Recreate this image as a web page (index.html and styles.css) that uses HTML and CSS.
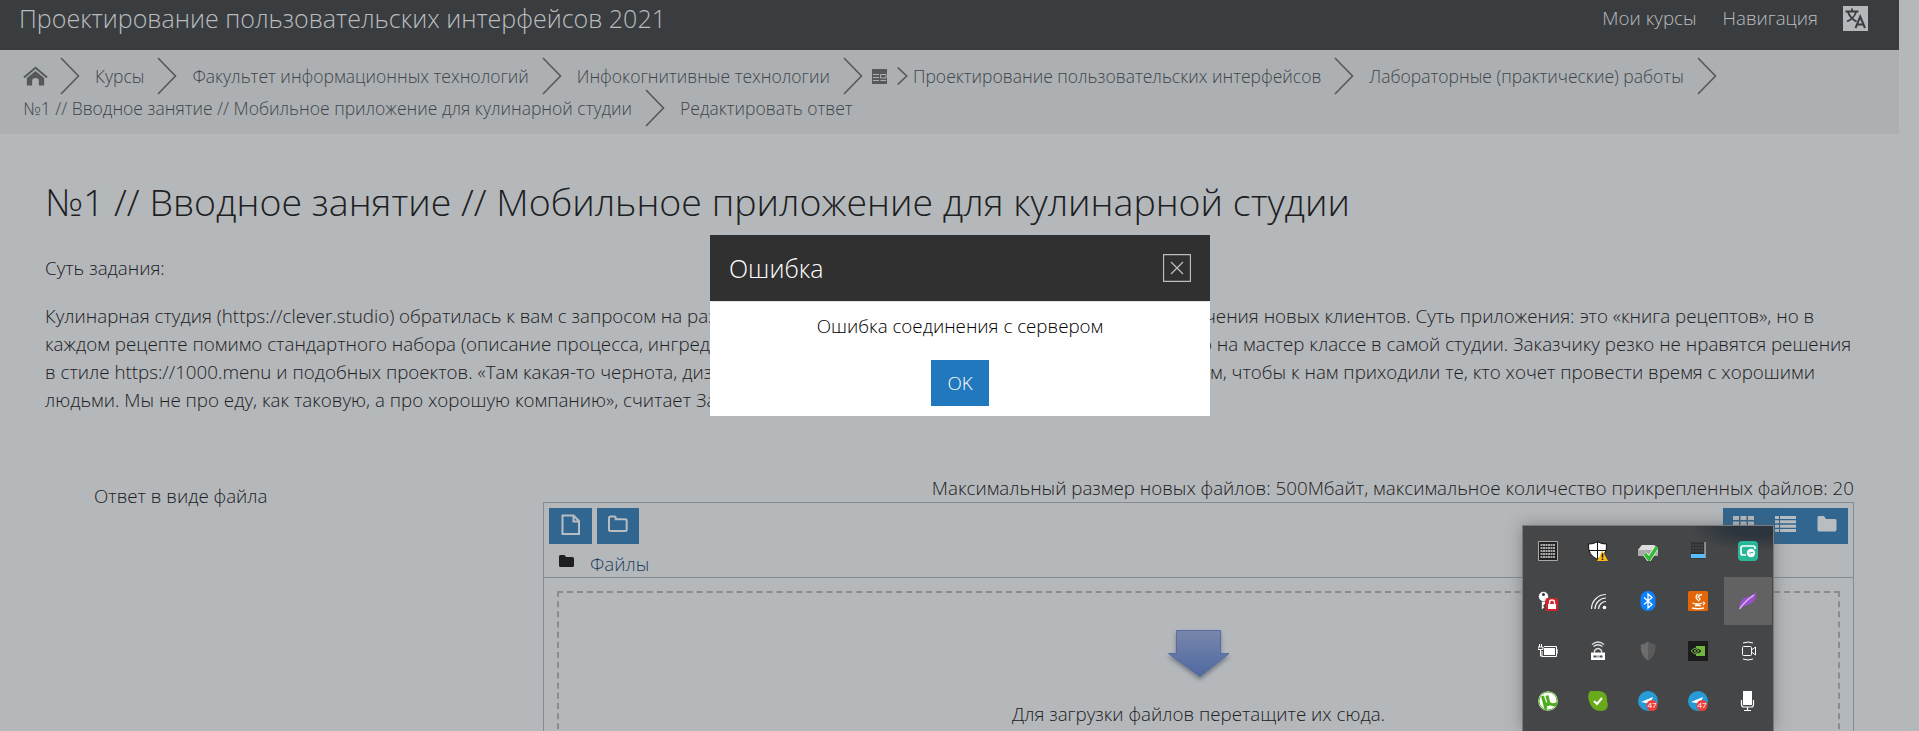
FILE: index.html
```html
<!DOCTYPE html>
<html lang="ru"><head><meta charset="utf-8"><title>Редактировать ответ</title><link rel="stylesheet" href="styles.css"></head>
<body>
<div class="page">
<header class="topbar"><div class="site">Проектирование пользовательских интерфейсов 2021</div>
<nav class="topnav"><a>Мои курсы</a><a>Навигация</a>
<svg class="lang" viewBox="0 0 25 25"><rect width="25" height="25" fill="#b4b8bb"/><g fill="none" stroke="#3a3d40" stroke-width="1.8"><path d="M2.500 5.500h13M9 2.500v3M5 6c1 4 5 8 8.500 9.500M13 6c-1 4-5 8-9 9.500"/><path d="M12.500 22l4.700-11.500L22 22M14 18.500h6.500" stroke-width="2"/></g></svg></nav></header>
<nav class="crumbs">
<div class="row"><svg class="home" viewBox="0 0 26 20"><path d="M1 11.500L13 1.500l12 10" fill="none" stroke="#55595b" stroke-width="2"/><path d="M4 12L13 4.800l9 7.200V20h-5.500v-5a3.500 3 0 0 0-7 0v5H4z" fill="#55595b"/></svg><svg class="chev" viewBox="0 0 20 38"><path d="M1 1l17.500 18L1 37"/></svg><a>Курсы</a><svg class="chev" viewBox="0 0 20 38"><path d="M1 1l17.500 18L1 37"/></svg><a>Факультет информационных технологий</a><svg class="chev" viewBox="0 0 20 38"><path d="M1 1l17.500 18L1 37"/></svg><a>Инфокогнитивные технологии</a><svg class="chev" viewBox="0 0 20 38"><path d="M1 1l17.500 18L1 37"/></svg><svg class="grid" viewBox="0 0 15 15"><path d="M0 0h15v15H0z" fill="#55595b"/><path d="M1 5.500h6M1 8.500h6M1 11.500h6M8.500 5.500H14V9H8.500zM8.500 11.500H14" stroke="#acb0b3" stroke-width="1" fill="none"/></svg><svg class="mini" viewBox="0 0 11 18"><path d="M.7.500l9 8.500-9 8.500"/></svg><a>Проектирование пользовательских интерфейсов</a><svg class="chev" viewBox="0 0 20 38"><path d="M1 1l17.500 18L1 37"/></svg><a>Лабораторные (практические) работы</a><svg class="chev" viewBox="0 0 20 38"><path d="M1 1l17.500 18L1 37"/></svg></div>
<div class="row"><a>№1 // Вводное занятие // Мобильное приложение для кулинарной студии</a><svg class="chev" viewBox="0 0 20 38"><path d="M1 1l17.500 18L1 37"/></svg><a>Редактировать ответ</a></div>
</nav>
<main class="content">
<h1>№1 // Вводное занятие // Мобильное приложение для кулинарной студии</h1>
<p class="lead">Суть задания:</p>
<div class="task">
<div class="line first"><span>Кулинарная студия (https://clever.studio) обратилась к вам с запросом на раз</span><span>чения новых клиентов. Суть приложения: это «книга рецептов», но в</span></div>
<div class="line second"><span>каждом рецепте помимо стандартного набора (описание процесса, ингред</span><span>о на мастер классе в самой студии. Заказчику резко не нравятся решения</span></div>
<div class="line third"><span>в стиле https://1000.menu и подобных проектов. «Там какая-то чернота, диз</span><span>м, чтобы к нам приходили те, кто хочет провести время с хорошими</span></div>
<div class="line"><span>людьми. Мы не про еду, как таковую, а про хорошую компанию», считает За</span></div>
</div>
<section class="answer"><div class="label">Ответ в виде файла</div>
<div class="manager"><div class="limits">Максимальный размер новых файлов: 500Мбайт, максимальное количество прикрепленных файлов: 20</div>
<div class="box"><div class="tools"><div class="btns">
<button class="tool new"><svg width="20" height="22" viewBox="0 0 20 22"><path d="M1.500 1.500h11l5.500 5.500v13H1.500zM12.500 2v5.500H18" /></svg></button>
<button class="tool dir"><svg width="20" height="18" viewBox="0 0 20 18"><path d="M2.500 1.500h4q1.200 0 1.200 1.200v1.500h9.500q1.500 0 1.500 1.500v8.800q0 1.500-1.500 1.500H2.500Q1 16 1 14.500V3Q1 1.500 2.500 1.500z"/></svg></button></div>
<div class="views"><svg width="22" height="18" viewBox="0 0 22 18"><path d="M0 1h6v4H0zm7.500 0h6v4h-6zm7.500 0h6v4h-6zM0 6.500h6v4H0zm7.500 0h6v4h-6zm7.500 0h6v4h-6zM0 12h6v4H0zm7.500 0h6v4h-6zm7.500 0h6v4h-6z"/></svg><svg width="22" height="18" viewBox="0 0 22 18"><path d="M0 1h4v3H0zm5 0h16v3H5zM0 5.300h4v3H0zm5 0h16v3H5zM0 9.700h4v3H0zm5 0h16v3H5zM0 14h4v3H0zm5 0h16v3H5z"/></svg><svg width="20" height="18" viewBox="0 0 20 18"><path d="M2 1h5l2 3h9q1.500 0 1.500 1.500v9q0 2-1.500 2H2q-1.500 0-1.500-2v-12Q.5 1 2 1z"/></svg></div></div>
<div class="path"><svg width="15" height="13" viewBox="0 0 15 13"><path d="M1.500 0h4L7 2h6.500Q15 2 15 3.500v7q0 1.500-1.500 1.500h-12Q0 12 0 10.500v-9Q0 0 1.500 0z" fill="#1d2022"/></svg><a>Файлы</a></div>
<div class="dropwrap"><div class="drop"><svg width="66" height="56" viewBox="0 0 66 56"><defs><linearGradient id="ar" x2="0" y2="1"><stop stop-color="#7886ab"/><stop offset="1" stop-color="#4f69a2"/></linearGradient></defs><path class="shade" d="M10.500 2.500h44v23H63L34 48.500 2.500 25.500h8z" fill="url(#ar)" stroke="#556da3"/></svg><span>Для загрузки файлов перетащите их сюда.</span></div></div>
</div></div></section>
</main></div>

<div class="dialog"><div class="dhead"><span>Ошибка</span><svg width="28" height="28" viewBox="0 0 28 28"><path d="M.5.500h27v27H.500zM8 8l12 12M20 8L8 20" fill="none" stroke="#bdbdbd" stroke-width="1.300"/></svg></div><div class="dbody"><span>Ошибка соединения с сервером</span><button>OK</button></div></div>

<aside class="tray">
<i><svg viewBox="0 0 20 20"><path fill="#222" stroke="#aaa" d="M.5.500h19v19H.500z"/><path d="M2.500 4h15M2.500 7h15M2.500 10h15M2.500 13h15M2.500 16h15" stroke="#aaa" stroke-width="1.800" stroke-dasharray="2 .5"/></svg></i>
<i><svg viewBox="0 0 20 20"><path d="M9.500.7q4 2.500 9 2.300 1 11-9 15.500Q-.5 14 .5 3q5 .2 9-2.300z" fill="#fff" stroke="#111"/><path d="M9.500 1v17M1 9.500h17" stroke="#111"/><path d="M14.500 9.500L20 20H9z" fill="#fdb913"/><path d="M14.500 12.500v4m0 1v1.500" stroke="#111" stroke-width="1.500"/></svg></i>
<i><svg viewBox="0 0 20 20"><path d="M4 4h12l4 5v6H0V9z" fill="#aaa"/><path d="M4 4h12l4 5H0z" fill="#ddd"/><path d="M7 13l4 5 8-12" stroke="#e3f9dc" stroke-width="5" fill="none"/><path d="M7 13l4 5 8-12" stroke="#36b83a" stroke-width="3.500" fill="none"/></svg></i>
<i><svg viewBox="0 0 20 20"><path d="M3 1.500h14v16H3z" fill="#292b2d"/><path d="M5 2v11M8 2v11M11 2v11M14 2v11M3 4h13M3 7h13M3 10h13" stroke="#53565a" stroke-width=".6"/><path d="M17 1v16" stroke="#ddd"/><path d="M3 13h14v4H3z" fill="#58bcff"/></svg></i>
<i><svg viewBox="0 0 20 20"><rect width="20" height="20" rx="4" fill="#28b799"/><path d="M8 14H5q-2 0-2-2V7q0-2 2-2h10q2 0 2 2v1" stroke="#fff" stroke-width="1.700" fill="none"/><circle cx="13" cy="12" r="4.200" fill="#fff"/><path d="M11 12h2l1-1 1 1" stroke="#28b799" fill="none"/></svg></i>
<i><svg viewBox="0 0 20 20"><path d="M3.500 8v11l3-2.500-1-2 2-2V8" fill="#fff" stroke="#222" stroke-width=".5"/><circle cx="5.500" cy="5.500" r="5" fill="#fff" stroke="#222" stroke-width=".5"/><circle cx="5.500" cy="3.500" r="1.500" fill="#333"/><rect x="7.500" y="7" width="12.500" height="13" rx="2" fill="#d42229"/><path d="M10 13h8v5h-8z" fill="#fff"/><path d="M11.500 13v-1.500a2.500 2.500 0 0 1 5 0V13" fill="none" stroke="#fff" stroke-width="1.300"/></svg></i>
<i><svg viewBox="0 0 20 20"><g fill="none" stroke="#eee" stroke-width="1.200"><path d="M3.500 18C3.500 10 10 3.500 18 3.500M7 18c0-6 5-11 11-11M10.500 18c0-4 3.500-7.500 7.500-7.500" /></g><circle cx="16.500" cy="16.500" r="1.800" fill="#fff"/></svg></i>
<i><svg viewBox="0 0 20 20"><rect x="2.500" width="15" height="20" rx="7" fill="#0a80fc"/><path d="M6 6.500l8 7-4 3.500V3l4 3.500-8 7" fill="none" stroke="#fff" stroke-width="1.300"/></svg></i>
<i><svg viewBox="0 0 20 20"><rect width="20" height="20" rx="1.500" fill="#e36608"/><path d="M10 9q-4-3 0-6M10 10q4-2 0-4 1-2 4-2.500M4.500 12q4 2 10 0M7 14.500h6M4 17q6 1.500 12 0M15 11q3 1 0 3" stroke="#fff" fill="none" stroke-width="1.300"/></svg></i>
<i class="on"><svg viewBox="0 0 20 20"><path d="M1 19Q1 8 9 6q7-2 9-6 1 10-6 13-7 2-11 6z" fill="#9a50cc"/><path d="M1.500 18Q7 10 16 4" stroke="#e0c1f2" stroke-width="1.300" fill="none"/></svg></i>
<i><svg viewBox="0 0 20 20"><path d="M6 5.500h12.500v10H4V10m15 -1h1v3h-1M1.500 3v3M3.500 3v3M0 6h5v2.500H0zM2.500 8v7H4" fill="none" stroke="#fff"/><path d="M6 7h11v7H6z" fill="#fff"/></svg></i>
<i><svg viewBox="0 0 20 20"><path d="M3 11.500h14V19H3z" fill="#fff"/><path d="M5.500 15.500h3m1 0h1m1 0h3" stroke="#444" stroke-width="2"/><path d="M6.500 12V9.500q3.500-4 7 0V12M4 3.500q6-5 12 0M5.500 5.500q4.500-3.500 9 0" fill="none" stroke="#ddd" stroke-width="1.400"/></svg></i>
<i><svg viewBox="0 0 20 20"><path d="M10 .5Q13 3 17.200 3.500q1 11-7.200 16Q2 14.500 2.800 3.500 7 3 10 .5z" fill="#6d6d6d"/><path d="M10 .5Q13 3 17.200 3.500q1 11-7.200 16z" fill="#5b5b5b"/></svg></i>
<i><svg viewBox="0 0 20 20"><path fill="#1c1c1c" d="M0 0h20v20H0z"/><path d="M8 5h9v10H8z" fill="#72b541"/><path d="M3 10q5-6 11 0-5 6-11 0zm3 0q3-3 5 0-2 3-5 0z" fill="#1c1c1c" stroke="#72b541"/></svg></i>
<i><svg viewBox="0 0 20 20"><rect x="4.500" y="5.500" width="9" height="9" rx="1" fill="none" stroke="#fff"/><path d="M13.500 9l4-3v8l-4-3M5 2q5-2 10 0M5 18q5 2 10 0" fill="none" stroke="#fff"/></svg></i>
<i><svg viewBox="0 0 20 20"><circle cx="10" cy="10" r="9.800" fill="#fff"/><circle cx="10" cy="10" r="9" fill="none" stroke="#55b51b"/><path d="M4.500 5l3.500 13M6 10q2 5 5 3L9 4.500M11.500 12q2 3 7 1" fill="none" stroke="#4bad19" stroke-width="3"/></svg></i>
<i><svg viewBox="0 0 20 20"><path d="M2 0h9q9 1 8 10 3 9-5 10Q3 20 1 10-1 4 2 0z" fill="#69a91c"/><path d="M6 10l3 3 5-6" fill="none" stroke="#fff" stroke-width="2"/></svg></i>
<i><svg viewBox="0 0 20 20"><circle cx="10" cy="10" r="10" fill="#279bd5"/><path d="M3 11l12-5-3 7-4-1" fill="#fff"/><circle cx="14" cy="14.500" r="5.500" fill="#ee3f3b"/><text x="14" y="17.300" class="num">47</text></svg></i>
<i><svg viewBox="0 0 20 20"><circle cx="10" cy="10" r="10" fill="#279bd5"/><path d="M3 11l12-5-3 7-4-1" fill="#fff"/><circle cx="14" cy="14.500" r="5.500" fill="#ee3f3b"/><text x="14" y="17.300" class="num">47</text></svg></i>
<i><svg viewBox="0 0 20 20"><path d="M5 0h9v14H5z" fill="#fff"/><path d="M3.500 9v4.500q0 2.500 2.500 2.500h7.500q2 0 2-2.500V9M9.500 16v3M6 19.500h7" fill="none" stroke="#fff" stroke-width="1.200"/></svg></i>
</aside>
</body></html>
```
FILE: styles.css
```css
* { box-sizing: border-box; }
body { margin: 0; background: #b4b8bb; color: #1d2022; font: 300 18.75px/28px "Open Sans", sans-serif; overflow: hidden; height: 731px; }
.page { height: 731px; overflow: hidden; }
svg { display: block; flex: none; }
button { border: 0; padding: 0; font: inherit; }
.topbar { width: 1899px; height: 50px; background: #3a3d40; color: #b9bcbf; display: flex; justify-content: space-between; padding: 0 31px 0 19px; }
.site { font-size: 25px; line-height: 37px; white-space: nowrap; }
.topnav { display: flex; gap: 26px; line-height: 36px; }
.lang { width: 25px; height: 25px; margin-top: 6px; margin-left: -1px; }
.crumbs { width: 1899px; height: 84px; background: #acb0b3; padding: 10px 0 0 23px; color: #3f454a; font-size: 17.5px; }
.row { display: flex; align-items: center; height: 32px; white-space: nowrap; line-height: 38px; }
.home { width: 25px; height: 20px; margin-right: -1px; }
.chev { width: 20px; height: 38px; margin: 0 15px 0 13px; }
.chev path, .mini path { fill: none; stroke: #55595b; stroke-width: 1.6; }
.grid { width: 15px; height: 15px; margin: 0 10px 0 -6px; }
.mini { width: 11px; height: 18px; margin-right: 5px; }
.content { width: 1899px; padding: 0 45px; }
h1 { margin: 45px 0 0; font-size: 37.5px; font-weight: 300; line-height: 46px; white-space: nowrap; }
.lead { margin: 29px 0 20px; }
.line { display: flex; white-space: nowrap; height: 28px; }
.line span:first-child { width: 1155px; flex: none; }
.first span:first-child { width: 1160px; }
.second span:first-child { width: 1156px; }
.third span:first-child { width: 1165px; }
.answer { display: flex; margin-top: 59px; justify-content: space-between; }
.label { padding: 9px 0 0 49px; }
.manager { width: 1311px; }
.limits { text-align: right; white-space: nowrap; height: 29px; line-height: 30px; }
.box { border: 1px solid #858b90; height: 260px; }
.tools { display: flex; justify-content: space-between; padding: 5px; height: 46px; }
.btns { display: flex; gap: 5px; }
.tool { width: 43px; height: 36px; background: #316690; display: flex; justify-content: center; padding-top: 6px; }
.dir { width: 42px; padding-top: 7px; }
.tool path { fill: none; stroke: #b9bdc0; stroke-width: 2; }
.views { width: 125px; height: 36px; background: #316690; display: flex; justify-content: space-between; padding: 7px 11px 0 10px; }
.views svg { fill: #b9bdc0; }
.path { height: 29px; display: flex; gap: 16px; padding-left: 15px; border-bottom: 1px solid #858b90; line-height: 29px; }
.path svg { margin-top: 6px; }
.path a { color: #23405b; }
.dropwrap { padding: 13px; }
.drop { height: 230px; border: 2px dashed #898d90; display: flex; flex-direction: column; align-items: center; padding-top: 35px; }
.drop span { margin-top: 16px; }
.shade { filter: drop-shadow(0 3px 2px #777c84); }
.dialog { position: absolute; left: 710px; top: 235px; width: 500px; height: 181px; background: #fff; }
.dhead { height: 67px; background: #303030; border-bottom: 1px solid #e5e5e5; color: #fff; display: flex; align-items: center; justify-content: space-between; padding: 0 19px; font-size: 25px; }
.dbody { display: flex; flex-direction: column; align-items: center; color: #000; padding-top: 10px; }
.dbody button { width: 58px; height: 46px; margin-top: 20px; background: #2178bd; color: #fff; }
.tray { position: absolute; left: 1523px; top: 526px; width: 250px; height: 205px; overflow: hidden; background: radial-gradient(ellipse 65px 26px at 232px 0, #2c353e 40%, #45464700 100%), #454647; box-shadow: 0 0 0 1px #797b7d, 0 0 15px #5559; display: grid; grid-template-columns: repeat(5, 50px); grid-auto-rows: 50px; }
.tray i { display: grid; place-items: center; width: 48px; height: 48px; margin: 1px; }
.tray svg { width: 20px; height: 20px; }
.tray .on { background: #626263; }
.num { font: 8px "Open Sans", sans-serif; fill: #fff; text-anchor: middle; }
```
